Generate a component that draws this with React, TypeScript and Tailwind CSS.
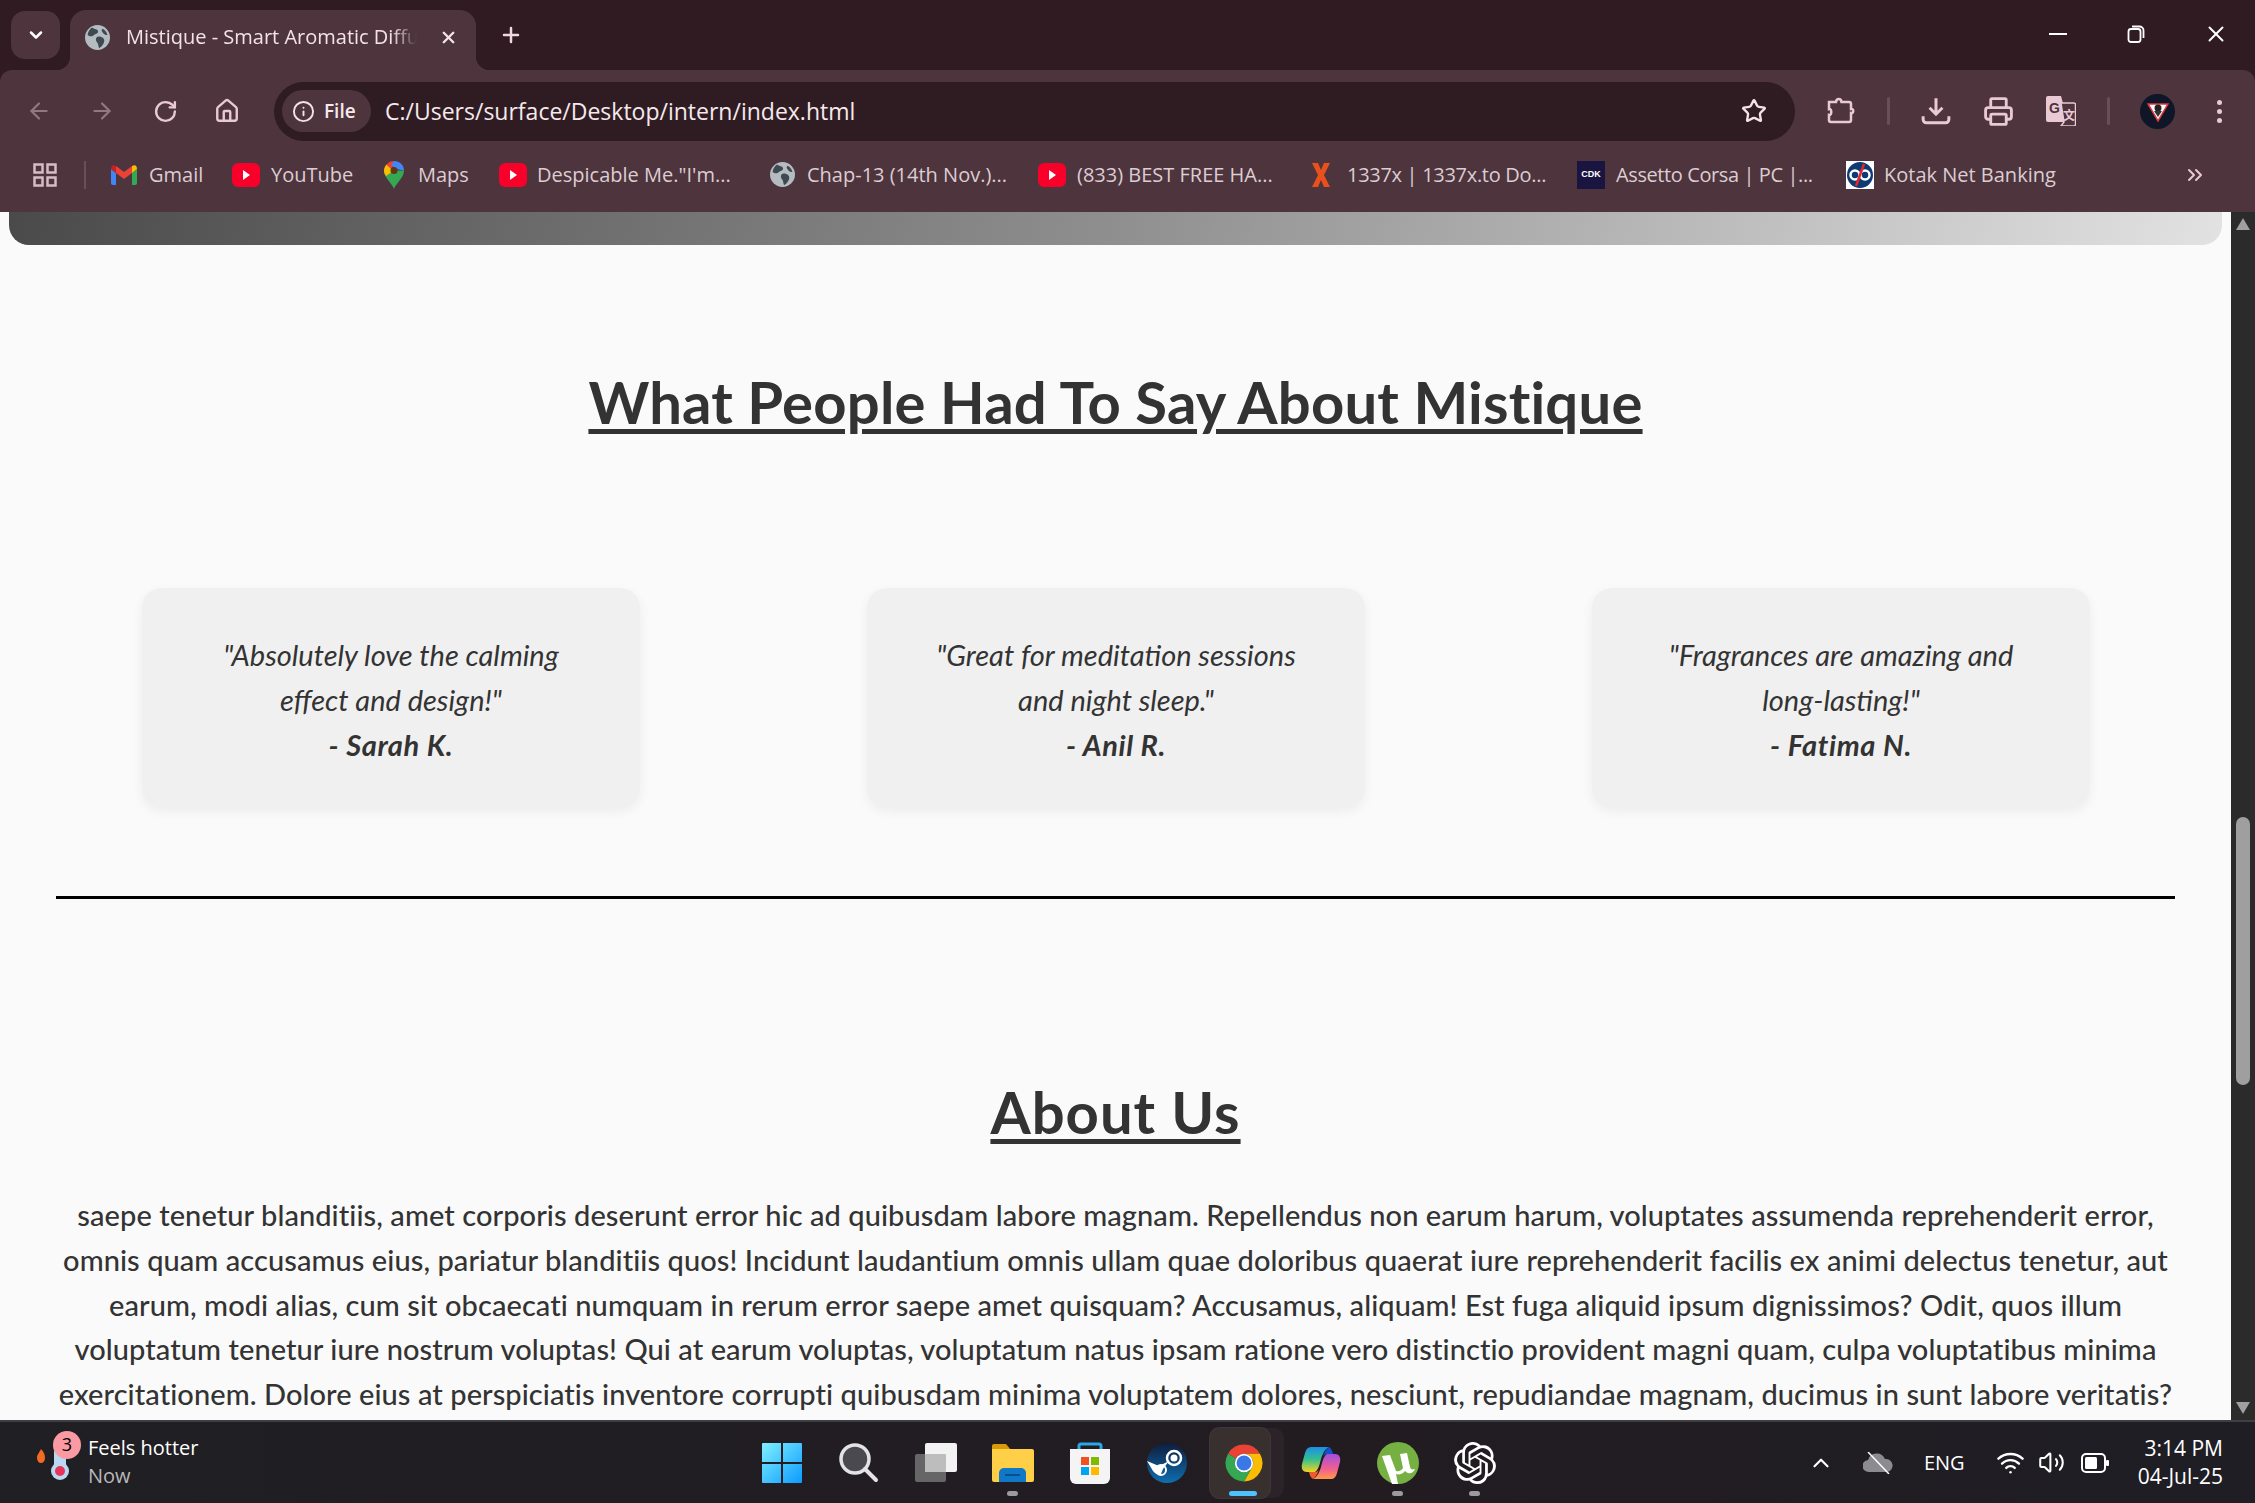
import { ArrowLeft, ArrowRight, ChevronDown, ChevronUp, ChevronsRight, House, Info, Plus, Printer, RotateCw, Star, Volume2, Wifi, X } from "lucide-react";
import { SiOpenai } from "react-icons/si";

const chromeFont = "font-['Open_Sans',sans-serif]";

const GlobeIcon = ({ className }: { className?: string }) => (
  <svg viewBox="0 0 24 24" className={className}>
    <circle cx="12" cy="12" r="12" fill="#b4bcc2" />
    <path d="M7 2.500c2 2 5 1 5.500 3.500s-3 2.500-4.500 4-4 1-5.500-.5C3 6 5 3.500 7 2.500zM13 11c3 0 5.500 1.500 5.500 4s-3 6.500-5 7c-1-2-.5-4-2-5.500S10 11 13 11zM17 3.500c2 1 4 3.500 4.500 6-2 .5-4-1-5-3s-.5-2 .5-3z" fill="#3f4a50" />
  </svg>
);

const YoutubeIcon = () => (
  <svg viewBox="0 0 28 24" className="h-[24px] w-[28px]">
    <rect width="28" height="24" rx="6" fill="#f8002a" />
    <path d="M11 7l7 5-7 5z" fill="#fff" />
  </svg>
);

const GmailIcon = () => (
  <svg viewBox="0 0 26 20" className="h-[20px] w-[26px]">
    <path d="M0 4v14a2 2 0 0 0 2 2h3V8z" fill="#4285f4" />
    <path d="M21 8v12h3a2 2 0 0 0 2-2V4z" fill="#34a853" />
    <path d="M5 8l8 6 8-6V1l-8 6-8-6z" fill="#ea4335" />
    <path d="M0 4l5 4V1L3.500.5C1.500-.5 0 1.500 0 4z" fill="#c5221f" />
    <path d="M21 1v7l5-4c0-2.500-1.500-4.500-3.500-3.500z" fill="#fbbc04" />
  </svg>
);

const MapsIcon = () => (
  <svg viewBox="0 0 20 28" className="h-[28px] w-[20px]">
    <path d="M10 28C8 22 0 17 0 9.500h20C20 17 12 22 10 28z" fill="#34a853" />
    <path d="M2.500 3.500L10 9.500 2 15C.5 13 0 11.500 0 9.500c0-2.500 1-4.500 2.500-6z" fill="#fbbc04" />
    <path d="M2.500 3.500C4.500 1 7 0 10 0l-2 9z" fill="#ea4335" />
    <path d="M10 0c5.500 0 10 4 10 9.500l-8-1.500L7 4z" fill="#4285f4" />
    <circle cx="10" cy="9.500" r="3.500" fill="#5c3a14" />
  </svg>
);

const LeetxIcon = () => (
  <svg viewBox="0 0 20 24" className="h-[24px] w-[20px]">
    <path d="M1 0h6l3 7 3-7h6l-6 12 6 12h-6l-3-7-3 7H1l6-12z" fill="#e8501c" />
  </svg>
);

const CdkIcon = () => (
  <div className="flex h-[28px] w-[28px] items-center justify-center bg-[#1a1440] font-['Liberation_Sans',sans-serif] text-[9px] font-bold leading-none text-white">
    CDK
  </div>
);

const KotakIcon = () => (
  <svg viewBox="0 0 28 28" className="h-[28px] w-[28px]">
    <rect width="28" height="28" fill="#fff" />
    <circle cx="14" cy="14" r="13" fill="#0e3a73" />
    <circle cx="9" cy="14" r="4.500" fill="none" stroke="#fff" strokeWidth="2.500" />
    <circle cx="19" cy="14" r="4.500" fill="none" stroke="#fff" strokeWidth="2.500" />
    <path d="M18 3L10 25" stroke="#e5262a" strokeWidth="2.500" />
  </svg>
);

const bookmarks = [
  { label: "Gmail", icon: <GmailIcon />, slot: "w-[121px]", gap: "w-[38px]", track: "" },
  { label: "YouTube", icon: <YoutubeIcon />, slot: "w-[152px]", gap: "w-[39px]", track: "" },
  { label: "Maps", icon: <MapsIcon />, slot: "w-[115px]", gap: "w-[34px]", track: "" },
  { label: 'Despicable Me."I\'m...', icon: <YoutubeIcon />, slot: "w-[271px]", gap: "w-[38px]", track: "" },
  { label: "Chap-13 (14th Nov.)...", icon: <GlobeIcon className="h-[25px] w-[25px]" />, slot: "w-[268px]", gap: "w-[37px]", track: "" },
  { label: "(833) BEST FREE HA...", icon: <YoutubeIcon />, slot: "w-[273px]", gap: "w-[39px]", track: "" },
  { label: "1337x | 1337x.to Do...", icon: <LeetxIcon />, slot: "w-[266px]", gap: "w-[36px]", track: "tracking-[-0.3px]" },
  { label: "Assetto Corsa | PC |...", icon: <CdkIcon />, slot: "w-[269px]", gap: "w-[39px]", track: "tracking-[-0.4px]" },
  { label: "Kotak Net Banking", icon: <KotakIcon />, slot: "w-[321px]", gap: "w-[38px]", track: "" },
];

const reviews = [
  { first: '"Absolutely love the calming', second: 'effect and design!"', author: "- Sarah K." },
  { first: '"Great for meditation sessions', second: 'and night sleep."', author: "- Anil R." },
  { first: '"Fragrances are amazing and', second: 'long-lasting!"', author: "- Fatima N." },
];

const aboutLines = [
  "saepe tenetur blanditiis, amet corporis deserunt error hic ad quibusdam labore magnam. Repellendus non earum harum, voluptates assumenda reprehenderit error,",
  "omnis quam accusamus eius, pariatur blanditiis quos! Incidunt laudantium omnis ullam quae doloribus quaerat iure reprehenderit facilis ex animi delectus tenetur, aut",
  "earum, modi alias, cum sit obcaecati numquam in rerum error saepe amet quisquam? Accusamus, aliquam! Est fuga aliquid ipsum dignissimos? Odit, quos illum",
  "voluptatum tenetur iure nostrum voluptas! Qui at earum voluptas, voluptatum natus ipsam ratione vero distinctio provident magni quam, culpa voluptatibus minima",
  "exercitationem. Dolore eius at perspiciatis inventore corrupti quibusdam minima voluptatem dolores, nesciunt, repudiandae magnam, ducimus in sunt labore veritatis?",
];

const TabStrip = () => (
  <div className={`flex h-[70px] items-end bg-[#2f1b21] ${chromeFont}`}>
    <div className="mb-[11px] ml-[11px] flex h-[48px] w-[49px] items-center justify-center rounded-[14px] bg-[#4e343d] text-white">
      <ChevronDown size={20} strokeWidth={3} />
    </div>
    <div className="relative ml-[10px] flex h-[60px] w-[406px] items-center rounded-t-[16px] bg-[#4e343d] pb-[6px] pl-[15px]">
      <span className="absolute bottom-0 left-[-14px] h-[14px] w-[14px] bg-[radial-gradient(circle_at_0_0,#2f1b21_14px,#4e343d_14.5px)]" />
      <span className="absolute bottom-0 right-[-14px] h-[14px] w-[14px] bg-[radial-gradient(circle_at_100%_0,#2f1b21_14px,#4e343d_14.5px)]" />
      <GlobeIcon className="h-[25px] w-[25px] shrink-0" />
      <span className="ml-[16px] w-[313px] whitespace-nowrap text-[20px] text-[#f3e3e8] [mask-image:linear-gradient(to_right,black_85%,transparent_93%)]">
        Mistique - Smart Aromatic Diffu
      </span>
      <X size={19} strokeWidth={3} className="text-[#f3e3e8]" />
    </div>
    <Plus size={24} strokeWidth={2.500} className="mb-[23px] ml-[23px] text-[#f0d8df]" />
    <div className="mb-[23px] ml-auto flex items-center text-white">
      <div className="h-[2px] w-[18px] bg-white" />
      <svg viewBox="0 0 18 18" fill="none" stroke="#fff" strokeWidth="1.800" className="ml-[60px] h-[18px] w-[18px]">
        <rect x="1.500" y="4" width="12" height="13" rx="2.500" />
        <path d="M5 1.500h7.500a4 4 0 0 1 4 4V13" />
      </svg>
      <X size={26} strokeWidth={1.800} className="ml-[58px] mr-[26px]" />
    </div>
  </div>
);

const Toolbar = () => (
  <div className="flex h-[71px] items-center pl-[26px] pt-[11px] text-[#e9c9d4]">
    <ArrowLeft size={26} strokeWidth={2} className="text-[#94787f]" />
    <ArrowRight size={26} strokeWidth={2} className="ml-[37px] text-[#94787f]" />
    <RotateCw size={25} strokeWidth={2.300} className="ml-[38px]" />
    <House size={26} strokeWidth={2.200} className="ml-[36px]" />
    <div className={`ml-[34px] flex h-[59px] w-[1521px] items-center rounded-full bg-[#2f1c23] pl-[8px] pr-[28px] ${chromeFont}`}>
      <div className="flex h-[42px] w-[89px] items-center rounded-full bg-[#4e343d] pl-[10px]">
        <Info size={23} strokeWidth={2} className="text-[#f3e3e8]" />
        <span className="ml-[9px] text-[19px] font-semibold text-[#f6e9ed]">File</span>
      </div>
      <span className="ml-[14px] text-[23px] text-[#f6e9ed]">C:/Users/surface/Desktop/intern/index.html</span>
      <Star size={26} strokeWidth={2.200} className="ml-auto text-[#f3e3e8]" />
    </div>
    <svg viewBox="0 0 28 28" fill="none" stroke="currentColor" strokeWidth="2.500" className="ml-[32px] h-[28px] w-[28px]">
      <path d="M2 5h7c.5-4 5-4 5.500 0H22a2 2 0 0 1 2 2v5c3-.5 3 4.500 0 4v7a2 2 0 0 1-2 2H4a2 2 0 0 1-2-2v-5c3 1 3-7 0-6z" />
    </svg>
    <div className="ml-[32px] h-[28px] w-[3px] rounded bg-[#6a4e58]" />
    <svg viewBox="0 0 28 28" fill="none" stroke="currentColor" strokeWidth="2.800" className="ml-[31px] h-[30px] w-[30px]">
      <path d="M14 2v15M8 11l6 6 6-6" />
      <path d="M2 19v3a3 3 0 0 0 3 3h18a3 3 0 0 0 3-3v-3" />
    </svg>
    <Printer size={31} strokeWidth={2.200} className="ml-[32px]" />
    <svg viewBox="0 0 30 30" className="ml-[32px] h-[30px] w-[30px]">
      <path d="M2 0h13l7 26H2a2 2 0 0 1-2-2V2a2 2 0 0 1 2-2z" fill="currentColor" />
      <path d="M15 7h13a1.500 1.500 0 0 1 1.500 1.500v20a1.500 1.500 0 0 1-1.500 1.500H15l3-4z" fill="#4e343d" stroke="currentColor" strokeWidth="1.500" />
      <text x="3" y="17" fontSize="14" fontWeight="700" fill="#4e343d" fontFamily="Liberation Sans">G</text>
      <text x="17" y="24" fontSize="12" fontWeight="700" fill="currentColor" fontFamily="Noto Sans CJK SC">文</text>
    </svg>
    <div className="ml-[31px] h-[28px] w-[3px] rounded bg-[#6a4e58]" />
    <div className="ml-[30px] flex h-[35px] w-[35px] items-center justify-center rounded-full bg-[#0e1627]">
      <svg viewBox="0 0 24 24" className="h-[24px] w-[24px]">
        <path d="M2 5h20L12 22z" fill="#fff" stroke="#d9383a" strokeWidth="1.500" />
        <circle cx="12" cy="9" r="3.500" fill="#222" />
        <path d="M8 12h8l-4 6z" fill="#333" />
      </svg>
    </div>
    <div className="ml-[42px] flex flex-col gap-[4px]">
      <span className="h-[5px] w-[5px] rounded-full bg-[#e9c9d4]" />
      <span className="h-[5px] w-[5px] rounded-full bg-[#e9c9d4]" />
      <span className="h-[5px] w-[5px] rounded-full bg-[#e9c9d4]" />
    </div>
  </div>
);

const BookmarksBar = () => (
  <div className={`flex h-[71px] items-center pb-[4px] pl-[33px] text-[20px] text-[#dccdd2] ${chromeFont}`}>
    <svg viewBox="0 0 24 24" fill="none" stroke="#d5bcc5" strokeWidth="2.500" className="h-[24px] w-[24px] shrink-0">
      <rect x="1.500" y="1.500" width="8" height="8" />
      <rect x="14.500" y="1.500" width="8" height="8" />
      <rect x="1.500" y="14.500" width="8" height="8" />
      <rect x="14.500" y="14.500" width="8" height="8" />
    </svg>
    <div className="ml-[27px] mr-[25px] h-[28px] w-[2px] bg-[#6a4e58]" />
    {bookmarks.map((b) => (
      <div key={b.label} className={`flex shrink-0 items-center ${b.slot}`}>
        <div className={`flex shrink-0 items-center ${b.gap}`}>{b.icon}</div>
        <span className={`whitespace-nowrap ${b.track}`}>{b.label}</span>
      </div>
    ))}
    <ChevronsRight size={24} strokeWidth={2} className="ml-[16px] text-[#e9c9d4]" />
  </div>
);

const Scrollbar = () => (
  <div className="flex h-full w-[24px] shrink-0 flex-col items-center bg-[#2b2b2b] py-[6px]">
    <div className="h-0 w-0 border-x-[7px] border-b-[12px] border-x-transparent border-b-[#a0a0a0]" />
    <div className="mt-[587px] h-[268px] w-[14px] rounded-full bg-[#9f9f9f]" />
    <div className="mt-auto h-0 w-0 border-x-[7px] border-t-[12px] border-x-transparent border-t-[#a0a0a0]" />
  </div>
);

const Page = () => (
  <main className="h-full min-w-0 flex-1 overflow-hidden bg-[#fafafa] font-['Lato',sans-serif] text-[#333]">
    <div className="mx-[9px] h-[33px] rounded-b-[20px] bg-[linear-gradient(100deg,#4a4a4a,#8f8f8f_50%,#e2e2e2)]" />
    <h2 className="mt-[128px] text-center text-[58px] font-bold leading-none tracking-[0.2px] underline decoration-[5px] underline-offset-[5px]">
      What People Had To Say About Mistique
    </h2>
    <div className="mx-[142px] mt-[157px] flex gap-[227px]">
      {reviews.map((r) => (
        <div key={r.author} className="flex h-[219px] w-[498px] shrink-0 flex-col items-center justify-center rounded-[20px] bg-[#f0f0f0] pt-[4px] text-[29px] leading-[45px] shadow-[0_4px_12px_rgba(0,0,0,0.06)]">
          <p className="italic">{r.first}</p>
          <p className="italic">{r.second}</p>
          <p className="font-bold italic tracking-[0.6px]">{r.author}</p>
        </div>
      ))}
    </div>
    <div className="mx-[56px] mt-[89px] h-[3px] bg-black" />
    <h2 className="mt-[184px] text-center text-[58px] font-bold leading-none tracking-[1px] underline decoration-[5px] underline-offset-[5px]">
      About Us
    </h2>
    <div className="mt-[52px] whitespace-nowrap text-center text-[29px] font-medium leading-[44.800px] tracking-[0.07px]">
      {aboutLines.map((line) => (
        <p key={line}>{line}</p>
      ))}
    </div>
  </main>
);

const RunningDot = () => <span className="absolute left-[33px] top-[49px] h-[5px] w-[11px] rounded-full bg-[#9b9b9b]" />;

const TaskbarIcons = () => (
  <div className="flex shrink-0 items-center">
    <div className="flex w-[77px] justify-center">
      <svg viewBox="0 0 40 40" className="h-[40px] w-[40px]">
        <defs>
          <linearGradient id="win" x1="0" y1="0" x2="1" y2="1">
            <stop offset="0" stopColor="#7ff0ff" />
            <stop offset="1" stopColor="#0c9bff" />
          </linearGradient>
        </defs>
        <path d="M1 0h18v19H0V1a1 1 0 0 1 1-1zM21 0h18a1 1 0 0 1 1 1v18H21zM0 21h19v19H1a1 1 0 0 1-1-1zM21 21h19v18a1 1 0 0 1-1 1H21z" fill="url(#win)" />
      </svg>
    </div>
    <div className="flex w-[77px] justify-center">
      <svg viewBox="0 0 40 40" className="h-[40px] w-[40px]">
        <circle cx="16" cy="16" r="14" fill="#4a4950" stroke="#e3e3e5" strokeWidth="3.500" />
        <path d="M26 26l11 11" stroke="#e3e3e5" strokeWidth="4" strokeLinecap="round" />
      </svg>
    </div>
    <div className="flex w-[77px] justify-center">
      <svg viewBox="0 0 42 40" className="h-[40px] w-[42px]">
        <rect x="0" y="11" width="31" height="28" rx="2" fill="#666" />
        <rect x="10" y="0" width="32" height="29" rx="2" fill="#f2f2f2" />
        <rect x="10" y="11" width="21" height="18" rx="1" fill="#bdbdbd" />
      </svg>
    </div>
    <div className="relative flex h-[42px] w-[77px] items-center justify-center">
      <svg viewBox="0 0 42 38" className="h-[38px] w-[42px]">
        <path d="M0 2a2 2 0 0 1 2-2h12l5 6H0z" fill="#d89a08" />
        <path d="M0 5h40a2 2 0 0 1 2 2v29a2 2 0 0 1-2 2H2a2 2 0 0 1-2-2z" fill="#ffcf48" />
        <path d="M7 38V29a5 5 0 0 1 5-5h17a5 5 0 0 1 5 5v9z" fill="#0f78c9" />
        <rect x="13" y="30" width="15" height="2" fill="#0b4f8c" />
      </svg>
      <RunningDot />
    </div>
    <div className="flex w-[77px] justify-center">
      <svg viewBox="0 0 40 42" className="h-[42px] w-[40px]">
        <path d="M9 9V4a2 2 0 0 1 2-2h18a2 2 0 0 1 2 2v5" fill="none" stroke="#27a8ea" strokeWidth="3" />
        <path d="M0 7h40v29a6 6 0 0 1-6 6H6a6 6 0 0 1-6-6z" fill="#f4f4f4" />
        <rect x="11" y="15" width="8" height="8" fill="#f25022" />
        <rect x="21" y="15" width="8" height="8" fill="#7fba00" />
        <rect x="11" y="25" width="8" height="8" fill="#00a4ef" />
        <rect x="21" y="25" width="8" height="8" fill="#ffb900" />
      </svg>
    </div>
    <div className="flex w-[77px] justify-center">
      <svg viewBox="0 0 40 40" className="h-[40px] w-[40px]">
        <defs>
          <linearGradient id="steam" x1="0" y1="0" x2="0" y2="1">
            <stop offset="0" stopColor="#0e1d3d" />
            <stop offset="1" stopColor="#0f6eb0" />
          </linearGradient>
        </defs>
        <circle cx="20" cy="20" r="20" fill="url(#steam)" />
        <circle cx="27" cy="15" r="7" fill="none" stroke="#fff" strokeWidth="2.500" />
        <circle cx="27" cy="15" r="3.500" fill="#fff" />
        <path d="M0 18l12 5 10-5-6 8-2 5c-5 1-6-1-8-3z" fill="#fff" />
        <circle cx="14" cy="27" r="5" fill="none" stroke="#fff" strokeWidth="2" />
      </svg>
    </div>
    <div className="relative flex h-[42px] w-[77px] justify-center">
      <div className="absolute left-[10px] top-[-14px] h-[70px] w-[69px] rounded-[10px] bg-[#2b2327]" />
      <div className="absolute left-[5px] top-[-14px] h-[70px] w-[60px] rounded-[10px] bg-[#38302f] shadow-[0_0_0_1px_#3e363a]" />
      <svg viewBox="0 0 48 48" className="relative h-[42px] w-[42px]">
        <path d="M5.800 13.500A21 21 0 0 1 42.200 13.500H24A10.500 10.500 0 0 0 14.900 18.750Z" fill="#ea4335" />
        <path d="M42.200 13.500H24A10.500 10.500 0 0 1 33.100 29.250L24 45A21 21 0 0 0 42.200 13.500Z" fill="#fbbc04" />
        <path d="M5.800 13.500A21 21 0 0 0 24 45L33.100 29.250A10.500 10.500 0 0 1 14.900 18.750Z" fill="#34a853" />
        <circle cx="24" cy="24" r="10.500" fill="#fff" />
        <circle cx="24" cy="24" r="8.500" fill="#3b78e7" />
      </svg>
      <span className="absolute left-[24px] top-[49px] h-[5px] w-[28px] rounded-full bg-[#4cc2ff]" />
    </div>
    <div className="flex w-[77px] justify-center">
      <svg viewBox="0 0 40 38" className="h-[38px] w-[40px]">
        <defs>
          <linearGradient id="cop1" x1="0" y1="0" x2="0" y2="1">
            <stop offset="0" stopColor="#1b8fe8" />
            <stop offset="0.5" stopColor="#35c08d" />
            <stop offset="1" stopColor="#f6d31f" />
          </linearGradient>
          <linearGradient id="cop2" x1="0" y1="0" x2="0" y2="1">
            <stop offset="0" stopColor="#a04fe0" />
            <stop offset="0.6" stopColor="#f25f8f" />
            <stop offset="1" stopColor="#ff9a4a" />
          </linearGradient>
        </defs>
        <path d="M10 3h18c-4 2-6 6-8 12-2 8-3 11-6 13H6c-4 0-6-3-5-8l3-11c1-4 3-6 6-6z" fill="url(#cop1)" />
        <path d="M30 35H12c4-2 6-6 8-12 2-8 3-11 6-13h8c4 0 6 3 5 8l-3 11c-1 4-3 6-6 6z" fill="url(#cop2)" />
        <path d="M28 3c2 1 3 3 4 7h-6c-2 0-4 2-4 3 1-4 3-8 6-10z" fill="#1450c8" />
        <path d="M12 35c-2-1-3-3-4-7h6c2 0 4-2 4-3-1 4-3 8-6 10z" fill="#ef5b2c" />
      </svg>
    </div>
    <div className="relative flex h-[42px] w-[77px] justify-center">
      <svg viewBox="0 0 42 42" className="h-[42px] w-[42px]">
        <circle cx="21" cy="21" r="21" fill="#76b043" />
        <path d="M5 14l8-1 6 16c3 1 6-1 7-3l-3-14 7-1 3 14c.5 2 2 3 5 2-1 3-4 5-7 4-1-.5-2-1-3-2-2 3-6 4-9 3l2 10h-6z" fill="#fff" />
      </svg>
      <RunningDot />
    </div>
    <div className="relative flex h-[42px] w-[77px] justify-center">
      <SiOpenai size={42} className="text-white" />
      <RunningDot />
    </div>
  </div>
);

const Tray = () => (
  <div className={`flex flex-1 items-center justify-end pr-[32px] text-white ${chromeFont}`}>
    <ChevronUp size={26} strokeWidth={2} />
    <svg viewBox="0 0 30 22" className="ml-[29px] h-[22px] w-[30px]">
      <path d="M6 20a6 6 0 0 1-1-12 9 9 0 0 1 17-1 6.500 6.500 0 0 1 2 13z" fill="#8c8c90" />
      <path d="M5 0l21 22" stroke="#fff" strokeWidth="1.500" />
    </svg>
    <span className="ml-[31px] text-[20px]">ENG</span>
    <Wifi size={29} strokeWidth={2} className="ml-[31px]" />
    <Volume2 size={27} strokeWidth={1.800} className="ml-[13px]" />
    <svg viewBox="0 0 28 20" fill="none" className="ml-[16px] h-[20px] w-[28px]">
      <rect x="1" y="1" width="23" height="18" rx="4" stroke="#fff" strokeWidth="2" />
      <rect x="4" y="4" width="12" height="12" rx="1.500" fill="#fff" />
      <rect x="25" y="7" width="3" height="6" rx="1" fill="#fff" />
    </svg>
    <div className="ml-[29px] flex flex-col items-end pb-[2px] text-[21px] leading-[28px]">
      <span>3:14 PM</span>
      <span>04-Jul-25</span>
    </div>
  </div>
);

const Taskbar = () => (
  <div className="flex h-[83px] shrink-0 items-center border-t-[2px] border-[#3f3f43] bg-[linear-gradient(to_right,#1f1f24,#221c21_60%,#1e1e24)]">
    <div className="flex w-[743px] shrink-0 items-center pl-[36px]">
      <div className="relative h-[50px] w-[52px]">
        <svg viewBox="0 0 52 50" className="h-[50px] w-[52px]">
          <path d="M5 11c3 3 4 6 4 9 0 3-2 5-4 5s-4-2-4-5c0-4 3-6 4-9z" fill="#f36b21" />
          <rect x="18" y="8" width="12" height="26" rx="6" fill="#b9d9f2" />
          <circle cx="24" cy="33" r="9" fill="#b9d9f2" />
          <circle cx="24" cy="33" r="5" fill="#e8345a" />
        </svg>
        <span className="absolute left-[17px] top-[-7px] flex h-[28px] w-[28px] items-center justify-center rounded-full bg-[#fb9aa3] font-['Open_Sans',sans-serif] text-[18px] text-black">
          3
        </span>
      </div>
      <div className={`flex flex-col pb-[2px] text-[20px] leading-[28px] ${chromeFont}`}>
        <span className="text-white">Feels hotter</span>
        <span className="text-[#b9b9b9]">Now</span>
      </div>
    </div>
    <TaskbarIcons />
    <Tray />
  </div>
);

export default function App() {
  return (
    <div className="flex h-[1503px] w-[2255px] flex-col overflow-hidden bg-[#2f1b21]">
      <TabStrip />
      <div className="rounded-t-[12px] bg-[#4e343d]">
        <Toolbar />
        <BookmarksBar />
      </div>
      <div className="flex min-h-0 flex-1">
        <Page />
        <Scrollbar />
      </div>
      <Taskbar />
    </div>
  );
}
